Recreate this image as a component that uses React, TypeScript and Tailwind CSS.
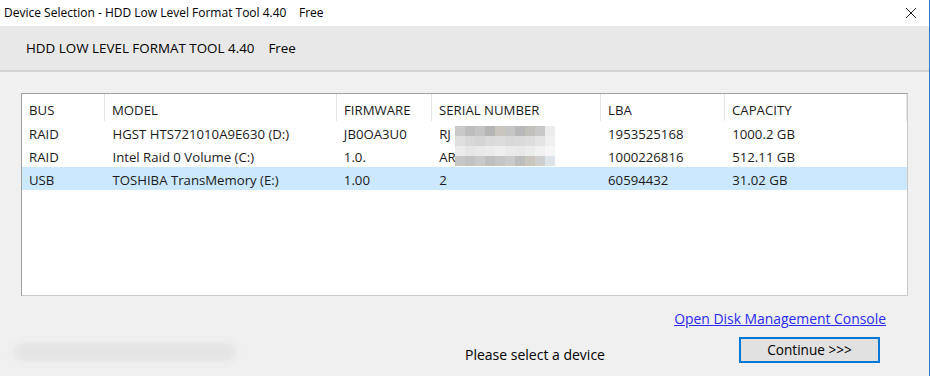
const font = { fontFamily: '"Open Sans", "Noto Sans", sans-serif' };

const columns = [
  { key: "bus", label: "BUS", width: 83 },
  { key: "model", label: "MODEL", width: 232 },
  { key: "fw", label: "FIRMWARE", width: 95 },
  { key: "serial", label: "SERIAL NUMBER", width: 169 },
  { key: "lba", label: "LBA", width: 124 },
  { key: "cap", label: "CAPACITY", width: 182 },
];

const devices = [
  { bus: "RAID", model: "HGST HTS721010A9E630 (D:)", fw: "JB0OA3U0", serial: "RJ", lba: "1953525168", cap: "1000.2 GB" },
  { bus: "RAID", model: "Intel Raid 0 Volume (C:)", fw: "1.0.", serial: "AR", lba: "1000226816", cap: "512.11 GB" },
  { bus: "USB", model: "TOSHIBA TransMemory (E:)", fw: "1.00", serial: "2", lba: "60594432", cap: "31.02 GB", selected: true },
];

// pixelated serial numbers (blurred in the original screenshot)
const mosaic = [
  ["#c9c9c9", "#bdbdbd", "#c4c4c4", "#b5b5b5", "#c9c6bd", "#c4c4c4", "#b8b8b8", "#c2c0bb", "#c8c8c8", "#ececec"],
  ["#dedede", "#d8d8d8", "#d4d4d4", "#dadada", "#dcdcdc", "#d8d8d8", "#dadada", "#dddddd", "#e4e4e4", "#f0f0f0"],
  ["#ececec", "#e6e6e6", "#e9e9e9", "#ebebeb", "#eeeeee", "#eaeaea", "#e8e8e8", "#ececec", "#f1f1f1", "#f6f6f6"],
  ["#c6c6c6", "#c1c1c1", "#c9c9c9", "#bfbfbf", "#c5c5c5", "#cacaca", "#bdbdbd", "#c8c6bf", "#cfcfcf", "#dde3e8"],
];

export default function App() {
  return (
    <div
      className="w-[930px] h-[376px] bg-[#f0f0f0] border-r border-[#2b79d0] flex flex-col text-[13.2px] text-[#1a1a1a] overflow-hidden"
      style={font}
    >
      {/* title bar */}
      <div className="h-[26px] bg-white flex items-center justify-between pl-[4px] pr-[10px] shrink-0">
        <span className="text-[12px] text-black">
          Device Selection - HDD Low Level Format Tool 4.40&nbsp;&nbsp;&nbsp;&nbsp;Free
        </span>
        <svg width="12" height="12" viewBox="0 0 12 12" className="mr-[2px]">
          <path d="M1 1 L11 11 M11 1 L1 11" stroke="#222" strokeWidth="1" />
        </svg>
      </div>

      {/* header band */}
      <div className="h-[46px] bg-[#e8e8e8] border-b-2 border-[#d2d2d2] flex items-center pl-[26px] shrink-0">
        <span className="text-[13.4px] text-black">HDD LOW LEVEL FORMAT TOOL 4.40&nbsp;&nbsp;&nbsp;&nbsp;Free</span>
      </div>

      {/* device list */}
      <div className="pt-[21px] px-[21px]">
        <div className="h-[203px] bg-white border border-[#a0a0a0] border-r-[#c8c8c8] border-b-[#c8c8c8]">
          <div className="flex h-[27px] items-center">
            {columns.map((c) => (
              <div
                key={c.key}
                className="h-full flex items-center pl-[7px] pt-[6px] border-r border-[#e5e5e5]"
                style={{ width: c.width }}
              >
                {c.label}
              </div>
            ))}
          </div>
          {devices.map((d) => (
            <div key={d.model} className={`flex h-[23px] items-center pt-[4px] ${d.selected ? "bg-[#cce8ff]" : ""}`}>
              {columns.map((c) => (
                <div key={c.key} className="pl-[7px] whitespace-nowrap overflow-hidden" style={{ width: c.width + 1 }}>
                  {(d as any)[c.key]}
                </div>
              ))}
            </div>
          ))}
        </div>
      </div>

      {/* bottom area */}
      <div className="relative flex-1">
        <div className="absolute left-[455px] top-[-170px] flex flex-col">
          {mosaic.map((row, i) => (
            <div key={i} className="flex">
              {row.map((col, j) => (
                <div key={j} className="w-[10px] h-[10px]" style={{ background: col }} />
              ))}
            </div>
          ))}
        </div>

        <div className="flex justify-end pr-[43px] pt-[13px] h-[41px]">
          <a href="#" className="text-[#2a2af0] underline text-[13.9px] leading-[19px]">
            Open Disk Management Console
          </a>
        </div>

        <div className="flex items-start">
          <div className="w-[465px] pl-[14px] pt-[6px]">
            <div className="w-[222px] h-[18px] rounded-full bg-[#e4e4e4] blur-[3px]" />
          </div>
          <div className="w-[274px] text-[14px] leading-[19px] text-black pt-[8px]">Please select a device</div>
          <button className="w-[141px] h-[26px] bg-[#e1e1e1] border-2 border-[#0078d7] text-[13.6px] text-black flex items-center justify-center">
            Continue &gt;&gt;&gt;
          </button>
        </div>
      </div>
    </div>
  );
}
